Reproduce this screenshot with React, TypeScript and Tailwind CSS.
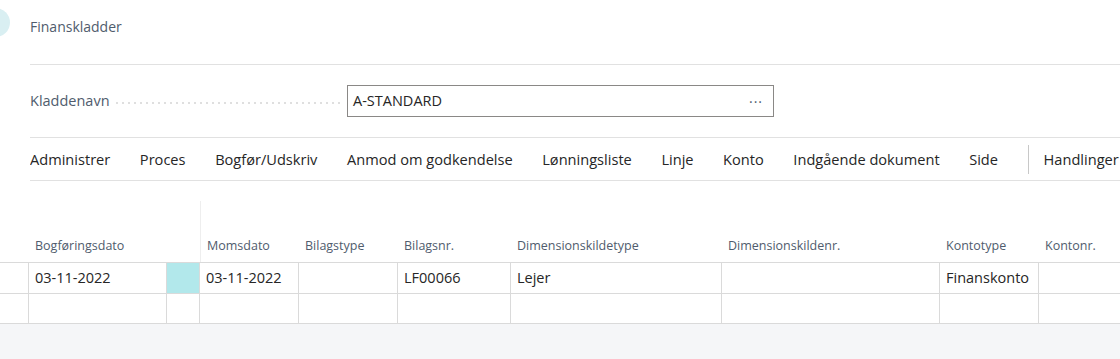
import React from "react";

const menu = [
  "Administrer",
  "Proces",
  "Bogfør/Udskriv",
  "Anmod om godkendelse",
  "Lønningsliste",
  "Linje",
  "Konto",
  "Indgående dokument",
  "Side",
];

const cols = [29, 138, 33, 99, 99, 113, 211, 218, 99, 200];
const headers = ["", "Bogføringsdato", "", "Momsdato", "Bilagstype", "Bilagsnr.", "Dimensionskildetype", "Dimensionskildenr.", "Kontotype", "Kontonr."];
const row1 = ["", "03-11-2022", "", "03-11-2022", "", "LF00066", "Lejer", "", "Finanskonto", ""];
const dots = Array.from({ length: 38 });

export default function App() {
  const grid = { gridTemplateColumns: cols.map((c) => c + "px").join(" ") };
  return (
    <div className="w-[1120px] h-[359px] overflow-hidden bg-white text-[#262626]" style={{ fontFamily: '"Open Sans", "Noto Sans", sans-serif' }}>
      <div className="relative h-[64px]">
        <div className="absolute left-[-19px] top-[8px] w-[29px] h-[29px] rounded-full bg-[#d9eff2]" />
        <div className="pl-[30px] pt-[17px] text-[14px] text-[#505c6d] leading-[20px]">Finanskladder</div>
      </div>
      <div className="ml-[30px] border-t border-[#e1e1e1]" />
      <div className="flex items-center h-[72px] pl-[30px]">
        <div className="w-[317px] flex items-center">
          <span className="text-[14.5px] text-[#505c6d] leading-[20px] pr-[6px]">Kladdenavn</span>
          <span className="flex-1 flex items-center gap-[4px] mt-[3px] overflow-hidden">
            {dots.map((_, i) => (
              <span key={i} className="w-[2px] h-[2px] shrink-0 rounded-full bg-[#d4d4d4]" />
            ))}
          </span>
        </div>
        <div className="w-[427px] h-[32px] border border-[#8a8886] flex items-center justify-between pl-[5px] pr-[10px]">
          <span className="text-[14.5px] leading-[20px]">A-STANDARD</span>
          <span className="text-[14px] text-[#505c6d] tracking-[1px]">···</span>
        </div>
      </div>
      <div className="ml-[30px] border-t border-[#e1e1e1]" />
      <div className="ml-[30px] h-[43px] flex items-center border-b border-[#e1e1e1] overflow-hidden">
        {menu.map((m) => (
          <span key={m} className="shrink-0 text-[14.6px] leading-[20px] mr-[29.6px] whitespace-nowrap">{m}</span>
        ))}
        <span className="shrink-0 w-px h-[29px] bg-[#c8c8c8] mr-[15px]" />
        <span className="shrink-0 text-[14.6px] leading-[20px] whitespace-nowrap">Handlinger</span>
      </div>
      <div className="relative">
        <div className="grid h-[82px] border-b border-[#dadada]" style={grid}>
          {headers.map((h, i) => (
            <div key={i} className={`flex items-end pb-[8px] pl-[6px] text-[12.5px] text-[#505c6d] leading-[16px] whitespace-nowrap ${i === 3 ? "border-l border-[#eeeeee] mt-[20px]" : ""}`}>
              {h}
            </div>
          ))}
        </div>
        <div className="grid h-[31px] border-b border-[#dadada]" style={grid}>
          {row1.map((c, i) => (
            <div key={i} className={`flex items-center pl-[6px] text-[14.5px] leading-[20px] whitespace-nowrap border-r border-[#dadada] ${i === 2 ? "bg-[#b2e8eb]" : ""}`}>
              {c}
            </div>
          ))}
        </div>
        <div className="grid h-[30px] border-b border-[#dadada]" style={grid}>
          {row1.map((_, i) => (
            <div key={i} className="border-r border-[#dadada]" />
          ))}
        </div>
        <div className="h-[40px] bg-[#f5f6f8]" />
      </div>
    </div>
  );
}
